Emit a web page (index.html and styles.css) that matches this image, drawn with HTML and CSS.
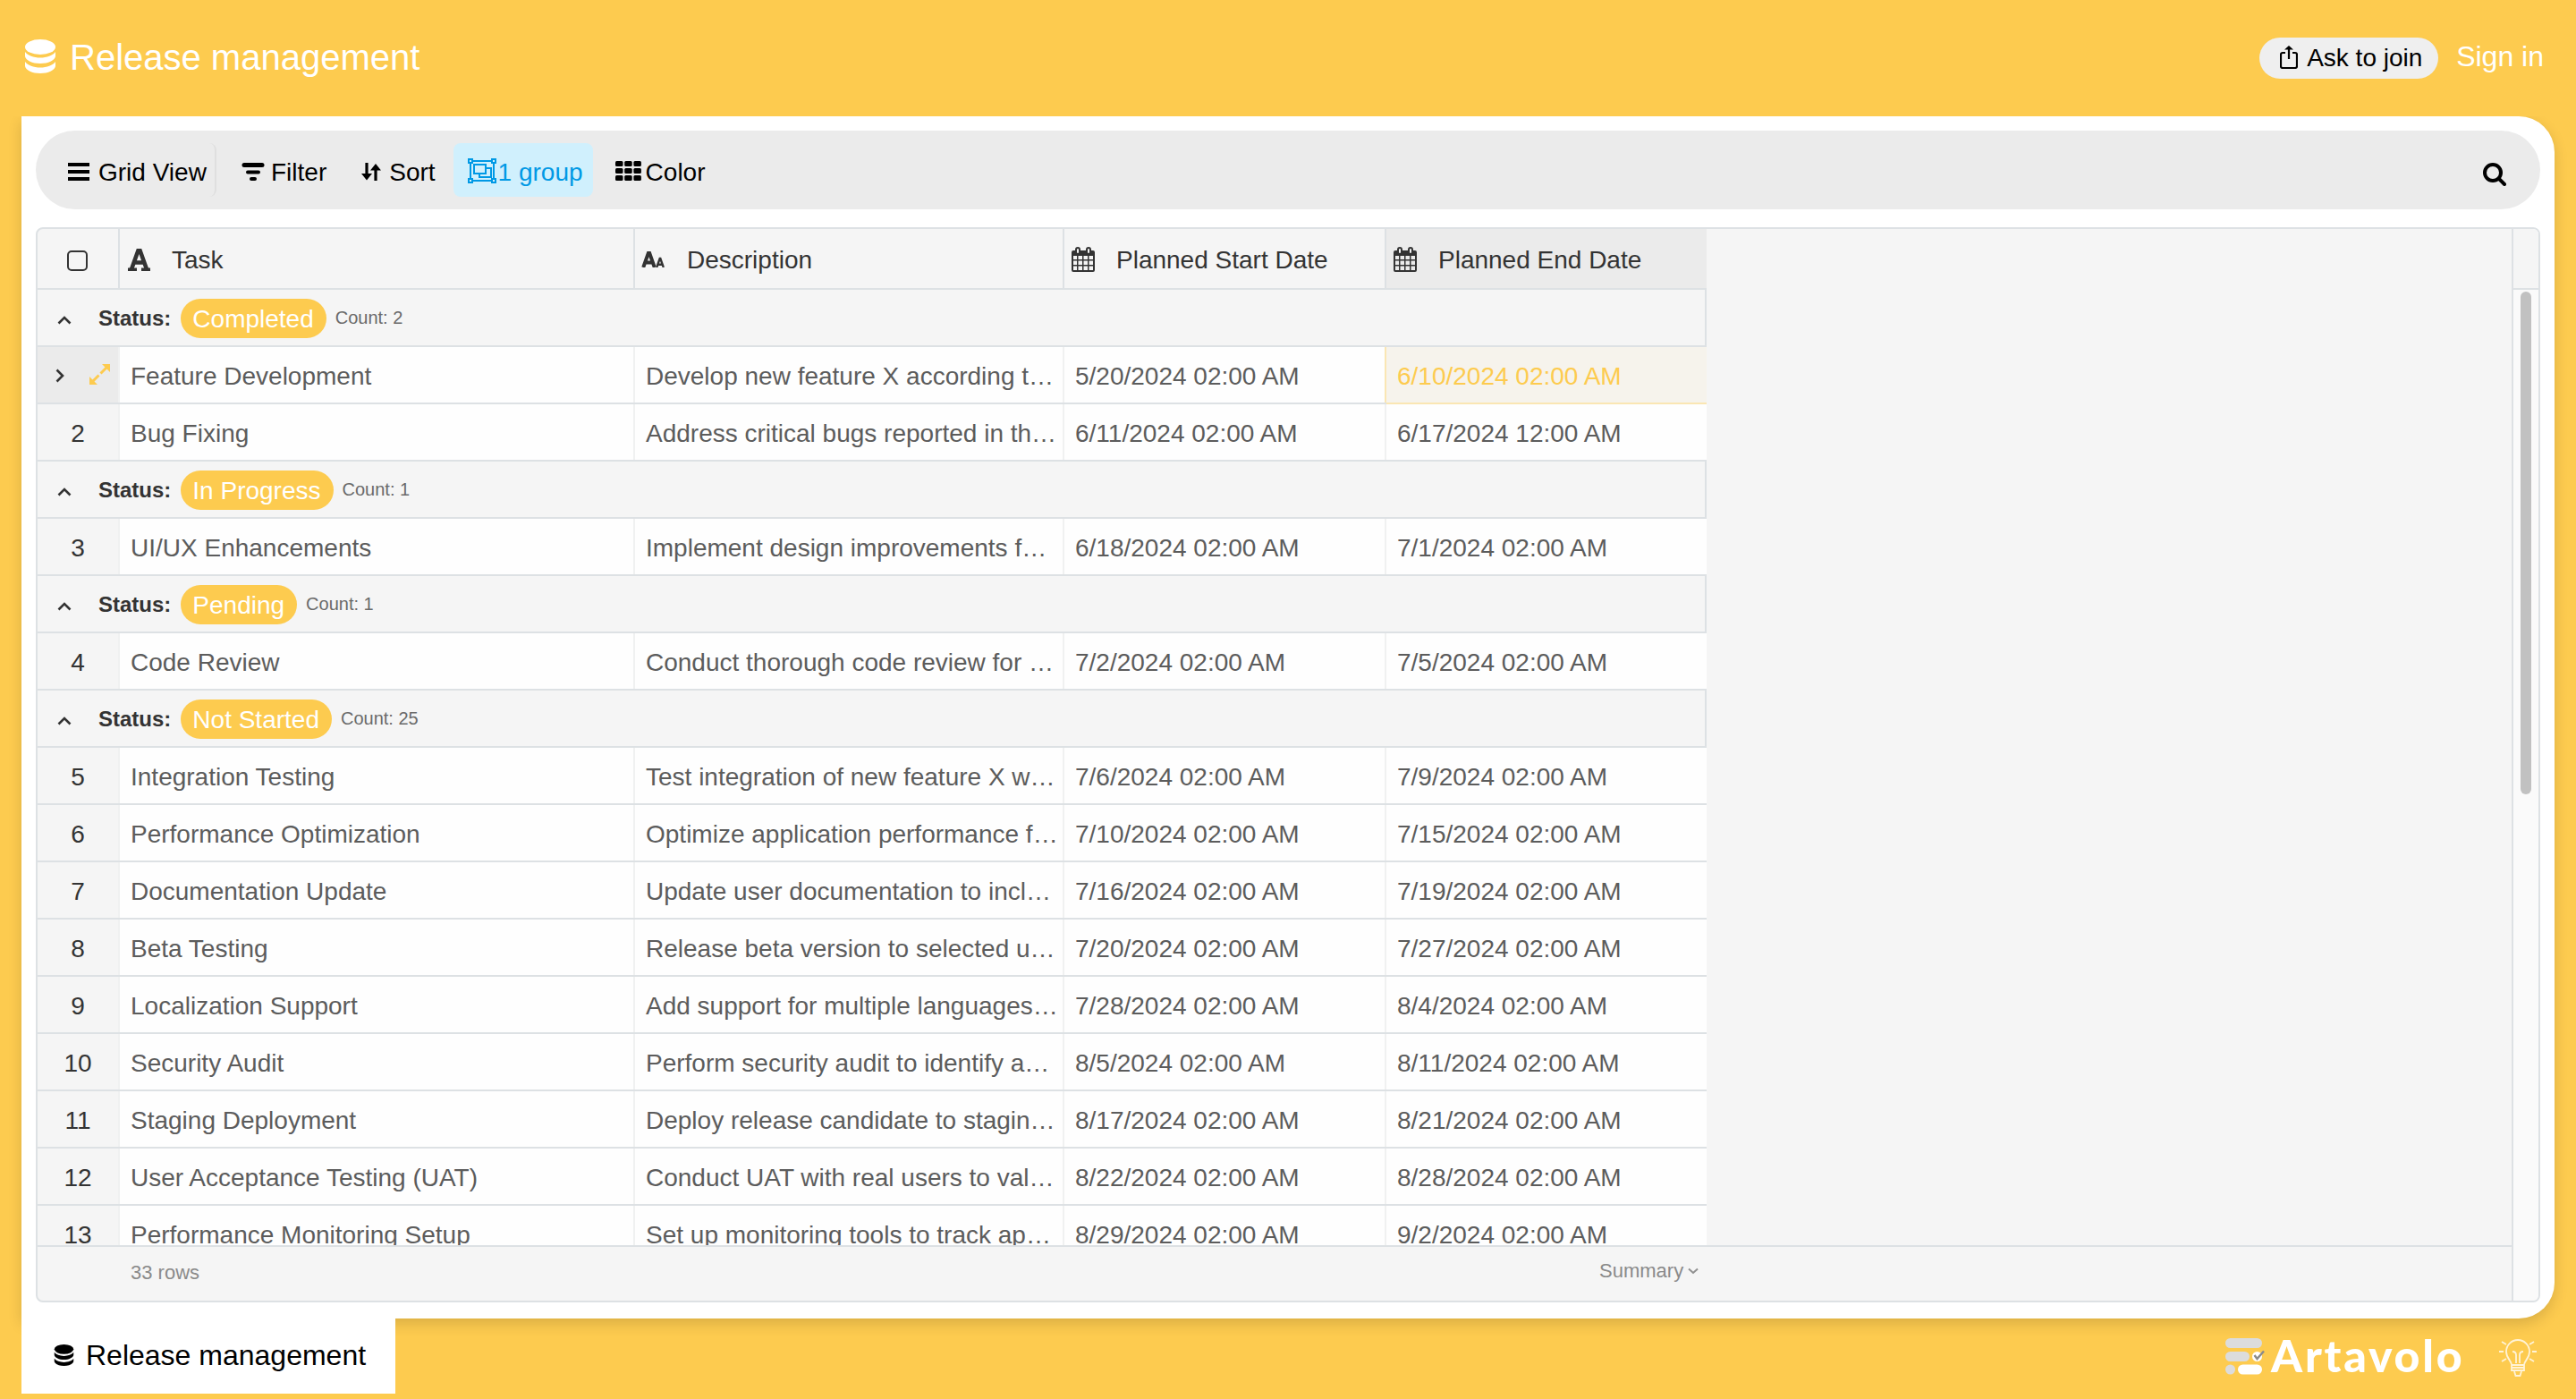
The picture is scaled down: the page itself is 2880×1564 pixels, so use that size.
FILE: index.html
```html
<!DOCTYPE HTML>
<html lang="en">
	<head>
		<title>Release management</title>
		<meta charset="utf-8">
		<link rel="stylesheet" href="styles.css">
	</head>
  <body>

  <svg width="0" height="0" class="defs">
    <symbol id="database" viewBox="0 0 34 38">
      <ellipse cx="17" cy="8.5" rx="17" ry="8.5"/>
      <path d="M0 14c3 4 9.500 6.500 17 6.500S31 18 34 14v5c-1 4.500-8 8-17 8S1 23.500 0 19z"/>
      <path d="M0 25c3 4 9.500 6.500 17 6.500S31 29 34 25v5c-1 4.500-8 8-17 8S1 34.500 0 30z"/>
    </symbol>
    <symbol id="chevron" viewBox="0 0 16 10">
      <path d="M1.500 8.500L8 2l6.500 6.500" fill="none" stroke="currentColor" stroke-width="2.6"/>
    </symbol>
    <symbol id="calendar" viewBox="0 0 26 28">
      <path d="M2 4h22a2 2 0 0 1 2 2v20a2 2 0 0 1-2 2H2a2 2 0 0 1-2-2V6a2 2 0 0 1 2-2zM2 10v4h4v-4zM7.500 10v4H12v-4zM13.500 10v4H18v-4zM19.500 10v4H24v-4zM2 15.500V20h4v-4.500zM7.500 15.500V20H12v-4.500zM13.500 15.500V20H18v-4.500zM19.500 15.500V20H24v-4.500zM2 21.500V26h4v-4.500zM7.500 21.500V26H12v-4.500zM13.500 21.500V26H18v-4.500zM19.500 21.500V26H24v-4.500z" fill-rule="evenodd"/>
      <rect x="5" y="1" width="4" height="7" rx="2" fill="#f4f4f4" stroke="currentColor" stroke-width="2"/>
      <rect x="17" y="1" width="4" height="7" rx="2" fill="#f4f4f4" stroke="currentColor" stroke-width="2"/>
    </symbol>
  </svg>

  <div id="header">
    <svg class="db"><use href="#database"/></svg>
    <span class="title">Release management</span>
    <button class="join">
      <svg width="20" height="26" viewBox="0 0 20 26"><path d="M6 8H3a2 2 0 0 0-2 2v13a2 2 0 0 0 2 2h14a2 2 0 0 0 2-2V10a2 2 0 0 0-2-2h-3M10 15V3" fill="none" stroke="#000" stroke-width="2.200"/><path d="M10 0l5 4.500H5z"/></svg>
      Ask to join
    </button>
    <a class="signin">Sign in</a>
  </div>

  <div id="panel">
    <div id="toolbar">
      <div class="tool view">
        <svg width="24" height="20" viewBox="0 0 24 20"><path d="M0 0h24v4H0zM0 8h24v4H0zM0 16h24v4H0z"/></svg>
        Grid View
      </div>
      <div class="tool filter">
        <svg width="26" height="20" viewBox="0 0 26 20"><path d="M3 2.500h20" fill="none" stroke="#000" stroke-width="5" stroke-linecap="round"/><path d="M7 10.500h12M11 18h4" fill="none" stroke="#000" stroke-width="4" stroke-linecap="round"/></svg>
        Filter
      </div>
      <div class="tool sort">
        <svg width="22" height="20" viewBox="0 0 22 20"><path d="M6 0v15M16 20V5" fill="none" stroke="#000" stroke-width="3.200"/><path d="M0 12h12l-6 7.500zM10 8.500h12L16 1z"/></svg>
        Sort
      </div>
      <div class="tool group">
        <svg width="32" height="28" viewBox="0 0 32 28" fill="none" stroke="#0099e5" stroke-width="2"><path d="M5 3h22M5 25h22M3 5v18M29 5v18M1 1h4v4H1zM27 1h4v4h-4zM1 23h4v4H1zM27 23h4v4h-4z"/><path d="M7 7h13v10H7zM20 11h6v10H13v-4"/></svg>
        1 group
      </div>
      <div class="tool color">
        <svg width="29" height="22" viewBox="0 0 29 22"><rect width="8.500" height="6" rx="1.500"/><rect x="10.200" width="8.500" height="6" rx="1.500"/><rect x="20.400" width="8.500" height="6" rx="1.500"/><rect y="8" width="8.500" height="6" rx="1.500"/><rect x="10.200" y="8" width="8.500" height="6" rx="1.500"/><rect x="20.400" y="8" width="8.500" height="6" rx="1.500"/><rect y="16" width="8.500" height="6" rx="1.500"/><rect x="10.200" y="16" width="8.500" height="6" rx="1.500"/><rect x="20.400" y="16" width="8.500" height="6" rx="1.500"/></svg>
        Color
      </div>
      <svg class="search" width="26" height="26" viewBox="0 0 26 26" fill="none" stroke="#000"><circle cx="11" cy="11" r="9" stroke-width="4"/><path d="M18 18l6 6" stroke-width="4" stroke-linecap="round"/></svg>
    </div>

    <div id="grid">
      <div class="main">
        <div class="head">
          <div class="c0"><span class="check"></span></div>
          <div class="c1"><svg width="25" height="25" viewBox="0 0 25 25"><path d="M4 23L11.500 2h2L21 23M7 15.500h11" fill="none" stroke="#333" stroke-width="4.600"/><path d="M0 21.500h10V25H0zM15 21.500h10V25H15z"/></svg>Task</div>
          <div class="c2"><svg width="26" height="18" viewBox="0 0 26 18"><path d="M2.200 18L8 1.500h1L14.800 18M4.500 12.500h8" fill="none" stroke="#333" stroke-width="4"/><path d="M17.200 18l3.500-10h.6l3.500 10M18.500 14.800h5" fill="none" stroke="#333" stroke-width="2.400"/></svg>Description</div>
          <div class="c3"><svg width="26" height="28"><use href="#calendar"/></svg>Planned Start Date</div>
          <div class="c4 active"><svg width="26" height="28"><use href="#calendar"/></svg>Planned End Date</div>
        </div>
        <div class="rows" id="rows"></div>
        <div class="foot">
          <span>33 rows</span>
          <span class="summary">Summary<svg width="12" height="8" viewBox="0 0 12 8"><path d="M1 1.500l5 4.500 5-4.500" fill="none" stroke="#909090" stroke-width="2"/></svg></span>
        </div>
      </div>
      <div class="scroll">
        <div class="corner"></div>
        <div class="thumb"></div>
      </div>
    </div>
  </div>

  <div id="bottom">
    <div class="tab"><svg class="db"><use href="#database"/></svg>Release management</div>
    <svg class="logo" width="44" height="41" viewBox="0 0 44 41">
      <rect width="41" height="11" rx="5.500" fill="#dcdcdc"/>
      <rect y="15" width="27" height="11" rx="5.500" fill="#dcdcdc"/>
      <circle cx="35.500" cy="20.500" r="5.500" fill="#fff"/>
      <path d="M32.500 19l3 4L43 14.500" fill="none" stroke="#8a8a8a" stroke-width="2.400"/>
      <circle cx="5.500" cy="35" r="5.500" fill="#dcdcdc"/>
      <rect x="14" y="29.500" width="27" height="11" rx="5.500" fill="#fff"/>
    </svg>
    <span class="brand">Artavolo</span>
    <svg class="bulb" width="42" height="42" viewBox="0 0 42 42" fill="none" stroke="#fff3d6" stroke-width="1.800">
      <path d="M14 29c0-5-6-7-6-15a13 13 0 0 1 26 0c0 8-6 10-6 15zM14 29v6h14v-6M14 32h14M17 36l1.500 5h5l1.500-5M19 27v-9q0-4-4-4M23 27v-9q0-4 4-4M0 14h5M37 14h5M3 3l5 3M39 3l-5 3M3 25l5-3M39 25l-5-3"/>
    </svg>
  </div>

  <script type="text/javascript" src="grid.js"></script>

  </body>

</html>
```
FILE: styles.css
```css
html, body {height: 100%;}

body {
margin: 0;
background: #fdcb4f;
color: #000;
fill: currentColor;
font-family: "Liberation Sans", Arial, sans-serif;
font-size: 28px;
display: flex;
flex-direction: column;
overflow: hidden;
}

* {box-sizing: border-box;}

svg {flex: none; display: block;}

.defs {position: absolute;}

#header {
height: 130px;
flex: none;
display: flex;
align-items: center;
padding: 0 36px 2px 28px;
color: #fff;
}

#header .db {
width: 34px;
height: 38px;
margin-bottom: 2px;
}

#header .title {
font-size: 40px;
margin-left: 16px;
}

.join {
height: 46px;
width: 200px;
margin: 2px 0 0 auto;
border: 0;
border-radius: 23px;
background: #efefef;
color: #000;
font: 28px "Liberation Sans", Arial, sans-serif;
display: flex;
align-items: center;
padding: 0 0 0 23px;
gap: 10px;
white-space: nowrap;
}

.join svg {margin-bottom: 2px;}

.signin {
font-size: 32px;
margin: 0 0 2px 20px;
}

#panel {
height: 1344px;
flex: none;
margin: 0 24px;
padding: 16px 16px 18px;
background: #fff;
border-radius: 0 40px 40px 0;
box-shadow: 0 6px 16px rgba(0,0,0,0.14);
clip-path: inset(0 -24px -30px -24px);
display: flex;
flex-direction: column;
}

#toolbar {
height: 88px;
flex: none;
border-radius: 44px;
background: #ebebeb;
padding: 4px 38px 0 26px;
display: flex;
align-items: center;
}

.tool {
height: 60px;
margin-bottom: 4px;
padding-top: 6px;
display: flex;
align-items: center;
border-radius: 8px;
white-space: nowrap;
}

.tool svg {margin-bottom: 2px;}

.view {
width: 176px;
padding-left: 10px;
gap: 10px;
border-right: 2px solid #dfdfdf;
}

.filter {margin-left: 28px; gap: 7px;}
.sort {margin-left: 39px; gap: 9px;}

.group {
width: 156px;
margin-left: 20px;
padding-left: 16px;
background: #d0f0fd;
color: #0099e5;
gap: 2px;
}

.group svg {margin-bottom: 5px;}

.color {margin-left: 25px; gap: 5px;}

.color svg {margin-bottom: 4px;}

.search {margin: 5px 0 0 auto;}

#grid {
margin-top: 20px;
height: 1202px;
border: 2px solid #dde1e4;
border-radius: 8px;
background: #f5f5f5;
color: #333;
overflow: hidden;
display: flex;
}

.main {
flex: 1;
display: flex;
flex-direction: column;
}

.head {
height: 68px;
width: 1866px;
flex: none;
border-bottom: 2px solid #dde1e4;
display: flex;
}

.head > div {
display: flex;
align-items: center;
border-right: 2px solid #dde1e4;
padding-top: 4px;
}

.head svg {margin-bottom: 2px;}

.head > div.active {
background: #ebebeb;
border-right: 0;
}

.c0 {width: 92px; justify-content: center;}
.c1 {width: 576px;}
.c2 {width: 480px;}
.c3 {width: 360px;}
.c4 {width: 358px;}

.head .c1 {padding-left: 9px; gap: 24px;}
.head .c2 {padding-left: 7px; gap: 25px;}
.head .c3, .head .c4 {padding-left: 8px; gap: 24px;}

.check {
width: 23px;
height: 23px;
border: 2px solid #333;
border-radius: 5px;
margin: 0 1px 0 0;
}

.rows {
flex: 1;
min-height: 0;
width: 1866px;
overflow: hidden;
}

.row, .grp {
height: 64px;
border-bottom: 2px solid #dde1e4;
display: flex;
}

.row div {
border-right: 2px solid #f0f1f1;
line-height: 63px;
background: #fefefe;
color: #5c5c5c;
padding: 1px 0 0 12px;
height: 62px;
white-space: nowrap;
overflow: hidden;
}

.row .c0 {
background: #f5f5f5;
color: #333;
text-align: center;
padding-left: 0;
}

.row .c4 {border-right: 0;}

.row.current .c0 {
background: #ebebeb;
display: flex;
justify-content: flex-start;
align-items: center;
padding: 1px 0 0 17px;
gap: 26px;
}

.row.current .c0 svg:first-child {transform: rotate(90deg);}
.row.current .c0 svg + svg {margin: 0 0 2px -1px;}

.row.current .c3 {border-right-color: #fae6b3;}

.row.current .c4 {
background: #f6f3ec;
color: #fdcb4f;
height: 64px;
border-bottom: 2px solid #fae6b3;
}

.grp {
align-items: center;
border-right: 2px solid #dde1e4;
padding: 2px 0 0 22px;
}

.grp svg {margin-top: 4px;}

.grp b {
font-size: 24px;
margin-left: 30px;
}

.pill {
height: 44px;
line-height: 45px;
margin: 0 11px;
padding: 0 14px 0 13px;
border-radius: 22px;
background: #fdcb4f;
color: #fff;
}

.grp small {
font-size: 20px;
color: #6a6a6a;
margin: 0 0 2px -1px;
}

.foot {
height: 62px;
flex: none;
border-top: 2px solid #dde1e4;
font-size: 22px;
color: #8a8a8a;
display: flex;
align-items: center;
padding: 0 0 2px 104px;
}

.summary {
display: flex;
align-items: center;
margin: -4px 0 0 1565px;
gap: 5px;
}

.scroll {
width: 30px;
border-left: 2px solid #dde1e4;
background: #fafafa;
}

.corner {
height: 68px;
background: #f5f5f5;
border-bottom: 2px solid #dde1e4;
}

.thumb {
width: 12px;
height: 562px;
margin: 2px 0 0 8px;
border-radius: 6px;
background: #c1c1c1;
}

#bottom {
height: 90px;
padding-left: 24px;
display: flex;
position: relative;
}

.tab {
width: 418px;
height: 84px;
background: #fff;
font-size: 32px;
display: flex;
align-items: center;
padding: 0 0 2px 36px;
gap: 13px;
}

.tab .db {
width: 23px;
height: 24px;
}

.logo {margin: 22px 0 0 2046px;}

.brand {
font: 900 50px/56px Lato, sans-serif;
letter-spacing: 2.800px;
color: #fff;
margin: 13px 0 0 7px;
width: 216px;
}

.bulb {margin: 23px 0 0 39px;}
```
FILE: grid.js
```javascript
var data = [
	['Completed', 2, [
		['Feature Development', 'Develop new feature X according t…', '5/20/2024 02:00 AM', '6/10/2024 02:00 AM'],
		['Bug Fixing', 'Address critical bugs reported in th…', '6/11/2024 02:00 AM', '6/17/2024 12:00 AM']
	]],
	['In Progress', 1, [
		['UI/UX Enhancements', 'Implement design improvements f…', '6/18/2024 02:00 AM', '7/1/2024 02:00 AM']
	]],
	['Pending', 1, [
		['Code Review', 'Conduct thorough code review for …', '7/2/2024 02:00 AM', '7/5/2024 02:00 AM']
	]],
	['Not Started', 25, [
		['Integration Testing', 'Test integration of new feature X w…', '7/6/2024 02:00 AM', '7/9/2024 02:00 AM'],
		['Performance Optimization', 'Optimize application performance f…', '7/10/2024 02:00 AM', '7/15/2024 02:00 AM'],
		['Documentation Update', 'Update user documentation to incl…', '7/16/2024 02:00 AM', '7/19/2024 02:00 AM'],
		['Beta Testing', 'Release beta version to selected u…', '7/20/2024 02:00 AM', '7/27/2024 02:00 AM'],
		['Localization Support', 'Add support for multiple languages…', '7/28/2024 02:00 AM', '8/4/2024 02:00 AM'],
		['Security Audit', 'Perform security audit to identify a…', '8/5/2024 02:00 AM', '8/11/2024 02:00 AM'],
		['Staging Deployment', 'Deploy release candidate to stagin…', '8/17/2024 02:00 AM', '8/21/2024 02:00 AM'],
		['User Acceptance Testing (UAT)', 'Conduct UAT with real users to val…', '8/22/2024 02:00 AM', '8/28/2024 02:00 AM'],
		['Performance Monitoring Setup', 'Set up monitoring tools to track ap…', '8/29/2024 02:00 AM', '9/2/2024 02:00 AM']
	]]
];

var chevron = '<svg width="16" height="10"><use href="#chevron"/></svg>';
var expand = '<svg width="23" height="23" viewBox="0 0 23 23" fill="#fdcb4f"><path d="M14 0h9v9zM0 14v9h9z"/><path d="M20 3l-7.500 7.500M10.500 12.500L3 20" stroke="#fdcb4f" stroke-width="3"/></svg>';

var html = '';
var n = 0;
data.forEach(function (g) {
	html += '<div class="grp">' + chevron + '<b>Status:</b><span class="pill">' + g[0] + '</span><small>Count: ' + g[1] + '</small></div>';
	g[2].forEach(function (r) {
		n++;
		// the first row is hovered, it shows its controls in place of the number
		html += '<div class="row' + (n == 1 ? ' current' : '') + '"><div class="c0">' + (n == 1 ? chevron + expand : n) + '</div>';
		for (var i = 0; i < r.length; i++) {
			html += '<div class="c' + (i + 1) + '">' + r[i] + '</div>';
		}
		html += '</div>';
	});
});
document.getElementById('rows').innerHTML = html;
```
